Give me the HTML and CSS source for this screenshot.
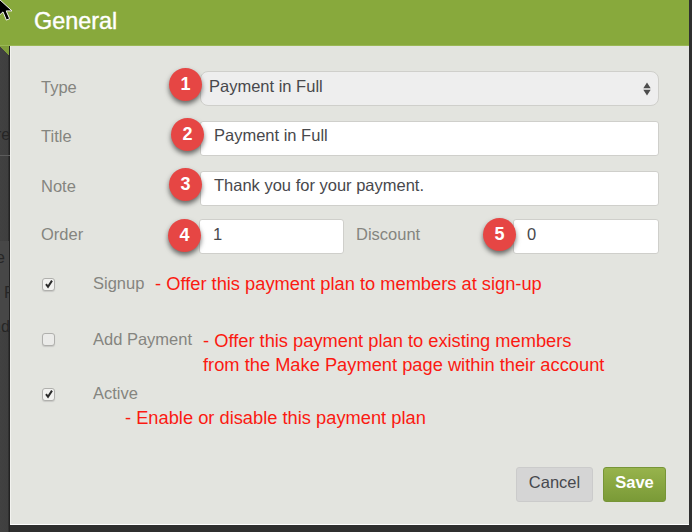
FILE: index.html
```html
<!DOCTYPE html>
<html lang="en">
<head>
<meta charset="utf-8">
<title>General</title>
<link rel="stylesheet" href="styles.css">
</head>
<body>
<div class="stage">
  <div class="backdrop">
    <span class="corner"></span>
    <span class="bg-text bg-1">re</span>
    <div class="bg-rule"></div>
    <div class="bg-band"></div>
    <span class="bg-text bg-2">e</span>
    <span class="bg-text bg-3">F</span>
    <span class="bg-text bg-4">nd</span>
  </div>
  <header class="titlebar"><h1>General</h1></header>
  <svg class="cursor" viewBox="0 0 14 23" width="14" height="23"><path d="M-1-1v16.5l4-3.6 3.4 8.2 3.2-1.4-3.4-7.8H12z" fill="#000" stroke="#f4f4f4" stroke-width="1"/></svg>
  <main class="dialog">
    <div class="row row-type">
      <label class="lbl">Type</label>
      <div class="field select"><span>Payment in Full</span>
        <svg class="updown" viewBox="0 0 8 14" width="8" height="14"><path d="M4 .5l3.7 5.7H.3zM4 13.5L.3 7.8h7.4z" fill="#4d4d4d"/></svg>
      </div>
    </div>
    <div class="row row-title">
      <label class="lbl">Title</label>
      <div class="field">Payment in Full</div>
    </div>
    <div class="row row-note">
      <label class="lbl">Note</label>
      <div class="field">Thank you for your payment.</div>
    </div>
    <div class="row row-order">
      <label class="lbl">Order</label>
      <div class="field order">1</div>
      <label class="lbl discount">Discount</label>
      <div class="field disc">0</div>
    </div>
    <div class="check-row signup">
      <span class="box checked"><svg viewBox="0 0 10 10" width="10" height="10"><path d="M2 5.2l2 2.6L8 1.6" fill="none" stroke="#2b2b2b" stroke-width="2"/></svg></span>
      <label class="chk-lbl">Signup</label>
    </div>
    <div class="check-row addpay">
      <span class="box"></span>
      <label class="chk-lbl">Add Payment</label>
    </div>
    <div class="check-row active">
      <span class="box checked"><svg viewBox="0 0 10 10" width="10" height="10"><path d="M2 5.2l2 2.6L8 1.6" fill="none" stroke="#2b2b2b" stroke-width="2"/></svg></span>
      <label class="chk-lbl">Active</label>
    </div>
    <footer class="actions">
      <button class="btn cancel">Cancel</button>
      <button class="btn save">Save</button>
    </footer>
  </main>
  <span class="badge b1">1</span>
  <span class="badge b2">2</span>
  <span class="badge b3">3</span>
  <span class="badge b4">4</span>
  <span class="badge b5">5</span>
  <p class="note n1">- Offer this payment plan to members at sign-up</p>
  <p class="note n2">- Offer this payment plan to existing members<br>from the Make Payment page within their account</p>
  <p class="note n3">- Enable or disable this payment plan</p>
</div>
</body>
</html>
```
FILE: styles.css
```css
* { box-sizing: border-box; }
html, body { margin: 0; padding: 0; }
body { width: 692px; height: 532px; overflow: hidden; background: #2f2f2f; font-family: "Liberation Sans", Arial, sans-serif; }
.stage { position: relative; width: 692px; height: 532px; overflow: hidden; background: #2f2f2f; }
.backdrop { position: absolute; left: 0; top: 46px; width: 10px; height: 486px; overflow: hidden; background: linear-gradient(90deg, #414141 0, #3f3f3f 8px, #222 9px, #222 10px); }
.corner { position: absolute; left: 0; top: 0; width: 9px; height: 9px; background: linear-gradient(225deg, #7f9d3a 50%, transparent 50%); }
.titlebar { position: relative; width: 689px; height: 46px; background: #88a93c; border-bottom: 1px solid #9ab755; padding: 8px 0 0 34px; }
.titlebar h1 { margin: 0; font-size: 23.4px; line-height: 27px; font-weight: 400; color: #fff; -webkit-text-stroke: .4px #fff; }
.dialog { position: relative; margin-left: 10px; width: 679px; height: 479px; background: #e3e4df; border-bottom: 1px solid #fff; border-left: 1px solid #f2f2ef; padding: 25px 30px 0 30px; display: flex; flex-direction: column; }
.row { display: flex; align-items: center; height: 35px; }
.row-title, .row-note { margin-top: 15px; }
.row-order { margin-top: 13px; }
.lbl { width: 159px; font-size: 16.5px; color: #85857f; margin-top: -4px; }
.row-type .lbl { margin-top: -3px; }
.field { flex: 1; height: 35px; margin-top: 0; background: #fff; border: 1px solid #cfcfcb; border-radius: 3px; padding-left: 13px; font-size: 16.5px; line-height: 26px; color: #48484c; }
.select { position: relative; background: #eeeeee; border-radius: 8px; padding-left: 8px; display: flex; justify-content: space-between; align-items: center; padding-right: 7px; }
.select span { margin-top: -5px; }
.updown { margin-top: 1px; }
.order { flex: 0 0 145px; line-height: 29px; }
.discount { width: 158px; margin-left: 12px; }
.disc { flex: 0 0 146px; line-height: 29px; }
.check-row { display: flex; align-items: center; height: 20px; }
.signup { margin-top: 20px; }
.addpay { margin-top: 35px; }
.active { margin-top: 35px; }
.box { width: 13px; height: 13px; margin-left: 1px; background: #ebebe9; border: 1px solid #b0b0ad; border-radius: 3px; display: flex; align-items: center; justify-content: center; box-shadow: 0 1px 1px #c8c8c5; }
.box svg { display: block; }
.box.checked { background: #f2f2f0; }
.chk-lbl { margin-left: 38px; font-size: 16.5px; margin-top: -2px; color: #85857f; }
.addpay .chk-lbl { margin-top: 0; }
.active .chk-lbl { margin-top: -1px; }
.actions { display: flex; justify-content: flex-end; gap: 10px; margin-top: 63px; margin-right: -7px; }
.btn { height: 35px; border-radius: 3px; font-family: inherit; font-size: 16.5px; padding: 0 0 5px; }
.cancel { width: 77px; background: #d5d5d5; border: 1px solid #cbcbcb; color: #47494e; }
.save { width: 63px; background: linear-gradient(#97b34c, #7a9a37); border: 1px solid #779537; color: #fff; font-weight: 700; }
.badge { position: absolute; width: 33px; height: 33px; border-radius: 50%; background: #e64644; color: #fff; font-size: 18px; font-weight: 700; line-height: 33px; text-align: center; box-shadow: 0 3px 5px rgba(0,0,0,.55); }
.b1 { left: 169px; top: 68px; }
.b2 { left: 171px; top: 118px; }
.b3 { left: 169px; top: 168px; }
.b4 { left: 168px; top: 219px; }
.b5 { left: 483px; top: 218px; }
.note { position: absolute; margin: 0; color: #fb1a12; font-size: 18.3px; line-height: 24px; white-space: nowrap; }
.n1 { left: 155px; top: 272px; }
.n2 { left: 203px; top: 329px; }
.n3 { left: 125px; top: 406px; }
.bg-text { position: absolute; font-size: 16px; color: #262626; }
.bg-1 { left: -4px; top: 80px; }
.bg-2 { left: -4px; top: 203px; }
.bg-3 { left: 4px; top: 238px; }
.bg-4 { left: -8px; top: 272px; }
.bg-rule { position: absolute; left: 0; top: 109px; width: 10px; height: 1px; background: #5c5c5c; }
.bg-band { position: absolute; left: 0; top: 195px; width: 9px; height: 90px; background: #474747; }
.cursor { position: absolute; left: 0; top: 0; }
```
